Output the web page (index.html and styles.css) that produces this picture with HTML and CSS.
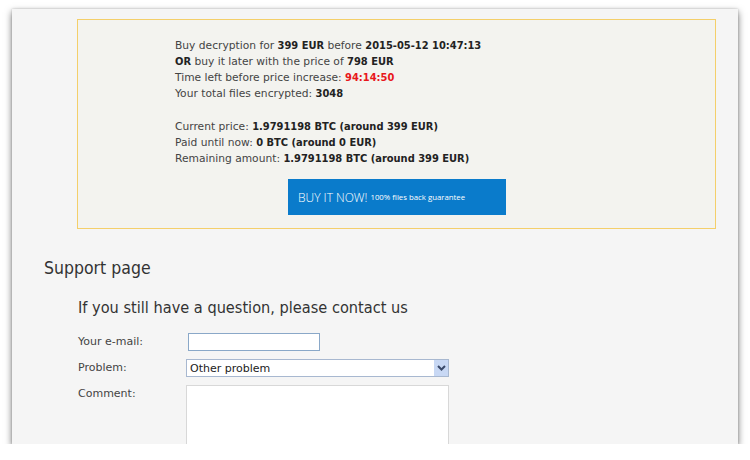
FILE: index.html
```html
<!DOCTYPE html>
<html>
<head>
<meta charset="utf-8">
<link rel="stylesheet" href="styles.css">
</head>
<body>
<div class="window">
  <div class="pricebox">
    <div class="info">
      <div class="line">Buy decryption for <b>399 EUR</b> before <b>2015-05-12 10:47:13</b></div>
      <div class="line"><b>OR</b> buy it later with the price of <b>798 EUR</b></div>
      <div class="line">Time left before price increase: <b class="red">94:14:50</b></div>
      <div class="line">Your total files encrypted: <b>3048</b></div>
      <div class="gap"></div>
      <div class="line">Current price: <b>1.9791198 BTC (around 399 EUR)</b></div>
      <div class="line">Paid until now: <b>0 BTC (around 0 EUR)</b></div>
      <div class="line">Remaining amount: <b>1.9791198 BTC (around 399 EUR)</b></div>
    </div>
    <div class="btnrow">
      <a class="buy">BUY IT NOW! <span class="small">100% files back guarantee</span></a>
    </div>
  </div>
  <h2 class="support">Support page</h2>
  <div class="contact">
    <h3 class="question">If you still have a question, please contact us</h3>
    <div class="form">
      <div class="row"><label class="lbl">Your e-mail:</label><input class="email" type="text"></div>
      <div class="row"><label class="lbl">Problem:</label>
        <div class="select"><span class="selval">Other problem</span><span class="arrow"><svg width="9" height="6" viewBox="0 0 9 6"><path d="M1 1 L4.5 4.5 L8 1" fill="none" stroke="#3a4a6a" stroke-width="2"/></svg></span></div>
      </div>
      <div class="row"><label class="lbl">Comment:</label><div class="textarea"></div></div>
    </div>
  </div>
</div>
</body>
</html>
```

FILE: styles.css
```css
html, body { margin: 0; padding: 0; background: #ffffff; }
body { font-family: "DejaVu Sans", sans-serif; color: #333; }
.window {
  margin: 9px 0 0 12px;
  width: 726px;
  height: 435px;
  background: #f5f5f5;
  box-shadow: 0 3px 7px rgba(0,0,0,0.55), 0 0 2px rgba(0,0,0,0.2);
  overflow: hidden;
  padding-top: 10px;
  box-sizing: border-box;
}
.pricebox {
  margin-left: 65px;
  width: 639px;
  height: 210px;
  box-sizing: border-box;
  border: 1px solid #f4cf6a;
  background: #f3f3ef;
  padding: 18px 0 0 97px;
}
.info { font-size: 10.7px; line-height: 16px; color: #444; }
.line { height: 16px; white-space: nowrap; }
.info b { color: #222; font-family: "DejaVu Sans Condensed", sans-serif; font-size: 11px; line-height: 16px; }
.info .red { color: #e8171b; }
.gap { height: 17px; }
.btnrow { margin: 12px 0 0 113px; }
.buy {
  display: flex; align-items: center;
  width: 218px; height: 36px; box-sizing: border-box;
  padding-left: 10px;
  background: #0a7bcb; color: #fff;
  font-size: 12px; font-family: "Open Sans", sans-serif; font-weight: 300;
  gap: 3px;
}
.buy .small { font-size: 7.8px; font-weight: 400; }
.support { font-size: 17.5px; font-weight: normal; margin: 29px 0 0 32px; color: #333; font-family: "DejaVu Sans Condensed", sans-serif; line-height: 20px; }
.contact { margin-left: 66px; }
.question { font-size: 16.2px; font-weight: normal; margin: 20px 0 0 0; color: #333; font-family: "DejaVu Sans Condensed", sans-serif; line-height: 20px; }
.form { margin-top: 15px; font-size: 11px; color: #444; }
.row { display: flex; align-items: flex-start; margin-bottom: 8px; }
.lbl { width: 108px; line-height: 18px; }
.email { width: 132px; height: 18px; box-sizing: border-box; border: 1px solid #8aa8c8; background: #fff; margin: 0 0 0 2px; padding: 0; }
.select { width: 263px; height: 18px; box-sizing: border-box; border: 1px solid #a8b8d0; background: #fff; display: flex; align-items: center; justify-content: space-between; padding-left: 3px; }
.selval { font-size: 11px; color: #222; }
.arrow { width: 14px; height: 16px; background: #c8d8f4; display: flex; align-items: center; justify-content: center; }
.textarea { width: 263px; height: 80px; box-sizing: border-box; border: 1px solid #d8d8d8; background: #fff; }
```
